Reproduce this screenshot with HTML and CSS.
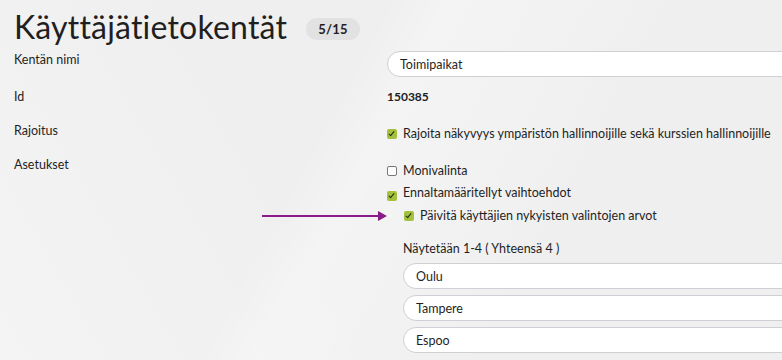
FILE: index.html
```html
<!DOCTYPE html>
<html>
<head>
    <title>Käyttäjätietokentät</title>
    <meta charset="UTF-8">
    <link rel="stylesheet" href="styles.css">
</head>
<body>

    <div class="page">
        <!-- Header -->
        <h1>
            Käyttäjätietokentät
            <span class="badge">5/15</span>
        </h1>

        <!-- Field name -->
        <div class="row row-name">
            <div class="label">Kentän nimi</div>
            <div class="value">
                <input type="text" class="text-input" value="Toimipaikat">
            </div>
        </div>

        <!-- Id -->
        <div class="row row-id">
            <div class="label">Id</div>
            <div class="value id-value">150385</div>
        </div>

        <!-- Restriction -->
        <div class="row row-limit">
            <div class="label">Rajoitus</div>
            <div class="value">
                <label class="check">
                    <span class="box checked"></span>
                    Rajoita näkyvyys ympäristön hallinnoijille sekä kurssien hallinnoijille
                </label>
            </div>
        </div>

        <!-- Settings -->
        <div class="row row-settings">
            <div class="label">Asetukset</div>
            <div class="value">
                <label class="check">
                    <span class="box"></span>
                    Monivalinta
                </label>
                <label class="check check-predef">
                    <span class="box checked"></span>
                    Ennaltamääritellyt vaihtoehdot
                </label>
                <label class="check check-sub">
                    <span class="arrow"></span>
                    <span class="box checked"></span>
                    Päivitä käyttäjien nykyisten valintojen arvot
                </label>

                <div class="options">
                    <div class="options-count">Näytetään 1-4 ( Yhteensä 4 )</div>
                    <input type="text" class="text-input" value="Oulu">
                    <input type="text" class="text-input" value="Tampere">
                    <input type="text" class="text-input" value="Espoo">
                </div>
            </div>
        </div>
    </div>

</body>
</html>
```

FILE: styles.css
```css
html, body {
    margin: 0;
    padding: 0;
    height: 100%;
    overflow: hidden;
}

body {
    font-family: "Lato", sans-serif;
    color: #1f1f1f;
    background-color: #efefef;
    background-image:
        linear-gradient(118deg, rgba(255,255,255,0) 40%, rgba(255,255,255,0.3) 46%, rgba(255,255,255,0.15) 62%, rgba(255,255,255,0) 70%),
        linear-gradient(60deg, rgba(255,255,255,0.3) 0%, rgba(255,255,255,0) 40%);
}

.page {
    padding: 0 0 0 14px;
}

h1 {
    margin: 0;
    padding-top: 4px;
    height: 44px;
    font-size: 32px;
    font-weight: 400;
    letter-spacing: 0.2px;
    display: flex;
    align-items: center;
    gap: 19px;
}

.badge {
    font-size: 13px;
    font-weight: 700;
    background-color: #e2e2e2;
    border-radius: 11px;
    padding: 3px 12px;
    margin-top: 6px;
}

.row {
    display: grid;
    grid-template-columns: 373px 1fr;
}

.label,
.value {
    font-size: 12.5px;
    line-height: 16px;
    white-space: nowrap;
}

.text-input {
    display: block;
    box-sizing: border-box;
    width: 460px;
    height: 26px;
    padding: 0 12px;
    font-family: inherit;
    font-size: 12.5px;
    color: #1f1f1f;
    background: #ffffff;
    border: 1px solid #cfcfd4;
    border-radius: 13px;
    outline: none;
}

.row-name {
    margin-top: 3px;
}

.row-name .label {
    margin-top: 1px;
}

.row-id {
    margin-top: 12px;
}

.id-value {
    font-weight: 700;
    font-size: 12px;
}

.row-limit {
    margin-top: 18px;
}

.row-limit .value {
    padding-top: 3px;
}

.row-settings {
    margin-top: 15px;
}

.row-settings .value {
    padding-top: 6px;
}

.check {
    display: flex;
    align-items: center;
    gap: 6px;
    position: relative;
    height: 16px;
}

.check-predef {
    margin-top: 6px;
}

.check-predef .box {
    margin-top: 6px;
}

.check-sub {
    margin-top: 7px;
    margin-left: 17px;
}

.box {
    box-sizing: border-box;
    width: 10px;
    height: 10px;
    flex: none;
    border: 1px solid #777;
    border-radius: 2px;
    background: #ffffff;
}

.box.checked {
    border: none;
    background-color: #a3c13c;
    position: relative;
}

.box.checked::after {
    content: "";
    position: absolute;
    left: 3px;
    top: 1px;
    width: 2px;
    height: 5px;
    border: solid #1f2a10;
    border-width: 0 1.5px 1.5px 0;
    transform: rotate(40deg);
}

/* purple annotation arrow */
.arrow {
    position: absolute;
    left: -142px;
    top: 7px;
    width: 116px;
    height: 2px;
    background: #8b1a8b;
}

.arrow::after {
    content: "";
    position: absolute;
    right: -9px;
    top: -4px;
    border-left: 9px solid #8b1a8b;
    border-top: 5px solid transparent;
    border-bottom: 5px solid transparent;
}

.options {
    margin-left: 16px;
    margin-top: 17px;
}

.options-count {
    margin-bottom: 6px;
}

.options .text-input {
    margin-bottom: 6px;
}
```
